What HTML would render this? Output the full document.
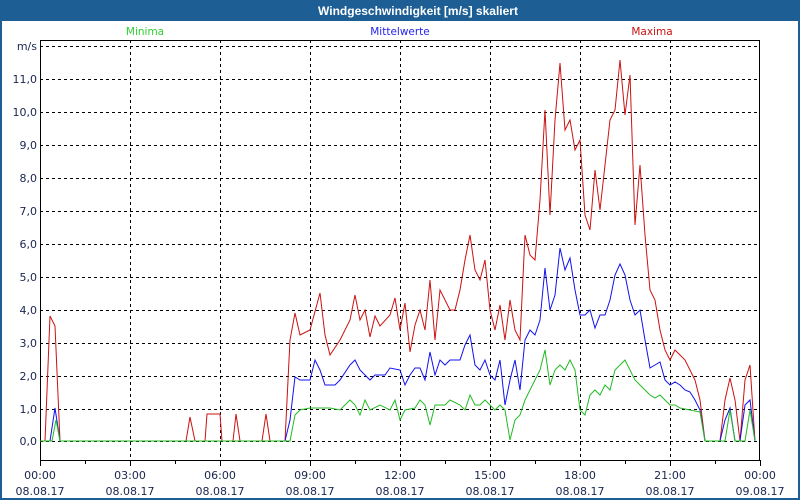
<!DOCTYPE html><html><head><style>body{margin:0;width:800px;height:500px;overflow:hidden;font-family:"DejaVu Sans","Liberation Sans",sans-serif}</style></head><body>
<svg width="800" height="500" xmlns="http://www.w3.org/2000/svg" font-family="DejaVu Sans, Liberation Sans, sans-serif">
<rect width="800" height="500" fill="#1d5e94"/>
<rect x="2" y="21" width="796" height="477" fill="#fff"/>
<text x="418" y="15" fill="#fff" font-size="12" font-weight="bold" text-anchor="middle" font-family="Liberation Sans, sans-serif">Windgeschwindigkeit [m/s] skaliert</text>
<text x="145" y="35" fill="#33cc33" font-size="10.5" text-anchor="middle">Minima</text>
<text x="400" y="35" fill="#2222ee" font-size="10.5" text-anchor="middle">Mittelwerte</text>
<text x="652" y="35" fill="#cc1111" font-size="10.5" text-anchor="middle">Maxima</text>
<g stroke="#000" stroke-dasharray="3,3" stroke-width="1">
<path d="M40 46.5H760M40 79.5H760M40 112.5H760M40 145.5H760M40 178.5H760M40 211.5H760M40 244.5H760M40 277.5H760M40 310.5H760M40 343.5H760M40 376.5H760M40 409.5H760M40 441.5H760"/>
<path d="M130.5 40V460M220.5 40V460M310.5 40V460M400.5 40V460M490.5 40V460M580.5 40V460M670.5 40V460"/>
</g>
<rect x="40.5" y="40.5" width="719" height="420" fill="none" stroke="#000"/>
<path d="M85.5 460v4M175.5 460v4M265.5 460v4M355.5 460v4M445.5 460v4M535.5 460v4M625.5 460v4M715.5 460v4M40.5 460v6M130.5 460v6M220.5 460v6M310.5 460v6M400.5 460v6M490.5 460v6M580.5 460v6M670.5 460v6M760.5 460v6" stroke="#000"/>
<g fill="#1a2550" font-size="11" text-anchor="end">
<text x="37" y="50">m/s</text><text x="37" y="83">11,0</text><text x="37" y="116">10,0</text><text x="37" y="149">9,0</text><text x="37" y="182">8,0</text><text x="37" y="215">7,0</text><text x="37" y="248">6,0</text><text x="37" y="281">5,0</text><text x="37" y="314">4,0</text><text x="37" y="347">3,0</text><text x="37" y="380">2,0</text><text x="37" y="413">1,0</text><text x="37" y="445">0,0</text>
</g>
<g fill="#1a2550" font-size="11" text-anchor="middle">
<text x="40" y="479">00:00</text><text x="40" y="495">08.08.17</text>
<text x="130" y="479">03:00</text><text x="130" y="495">08.08.17</text>
<text x="220" y="479">06:00</text><text x="220" y="495">08.08.17</text>
<text x="310" y="479">09:00</text><text x="310" y="495">08.08.17</text>
<text x="400" y="479">12:00</text><text x="400" y="495">08.08.17</text>
<text x="490" y="479">15:00</text><text x="490" y="495">08.08.17</text>
<text x="580" y="479">18:00</text><text x="580" y="495">08.08.17</text>
<text x="670" y="479">21:00</text><text x="670" y="495">08.08.17</text>
<text x="760" y="479">00:00</text><text x="760" y="495">09.08.17</text>
</g>
<g fill="none" stroke-width="1">
<polyline stroke="#cc1111" points="40,441 45,441 50,316 55,326 60,441 186,441 190,417 195,441 205,441 207,414 220,414 222,441 233,441 236,414 240,441 262,441 266,414 270,441 285,441 290,340 295,313 300,335 310,330 320,293 325,335 330,355 340,340 350,320 355,295 360,320 365,310 370,337 375,316 380,326 390,315 395,298 400,330 405,303 410,352 415,325 420,310 425,330 430,280 435,340 440,290 445,300 450,310 455,310 460,290 465,260 470,235 475,270 480,280 485,260 490,310 495,330 500,305 505,340 510,300 515,330 520,340 525,235 530,255 535,260 540,200 545,110 550,215 555,120 560,63 565,130 570,120 575,150 580,140 585,215 590,230 595,170 600,210 605,165 610,120 615,110 620,60 625,115 630,75 635,225 640,165 645,235 650,290 655,300 660,330 665,350 670,360 675,350 680,355 685,360 690,370 695,380 700,400 705,441 720,441 725,400 730,378 735,400 740,441 745,380 750,365 755,441"/>
<polyline stroke="#1111ee" points="40,441 50,441 55,408 60,441 285,441 290,420 295,377 300,380 310,380 315,360 320,370 325,385 335,385 340,380 350,365 355,360 360,370 370,380 375,375 385,375 390,368 400,370 405,385 410,375 415,368 420,368 425,380 430,352 435,375 440,360 445,365 450,360 460,360 465,345 470,335 475,365 480,370 485,360 490,375 495,380 500,360 505,405 510,380 515,360 520,390 525,340 530,330 535,335 540,320 545,268 550,310 555,295 560,248 565,270 570,258 575,290 580,315 585,315 590,310 595,328 600,315 605,315 610,300 615,275 620,264 625,275 630,300 635,315 640,310 645,340 650,368 655,365 660,362 665,380 670,385 675,382 680,385 685,390 690,392 695,400 700,410 705,441 720,441 725,420 730,408 735,441 740,441 745,405 750,400 755,441"/>
<polyline stroke="#22bb22" points="40,441 52,441 56,420 60,441 290,441 295,415 300,410 310,408 330,408 340,410 350,400 355,405 360,415 365,400 370,410 380,405 390,410 395,400 400,420 405,410 415,408 420,400 425,405 430,425 435,405 445,405 450,400 460,405 465,410 470,395 475,405 480,405 485,400 490,405 495,410 500,405 505,410 510,440 515,420 520,415 525,400 530,390 535,380 540,370 545,350 550,385 555,370 560,365 565,370 570,360 575,370 580,410 585,415 590,395 595,390 600,395 605,385 610,390 615,370 620,365 625,360 630,370 635,380 640,385 645,390 650,395 655,398 660,395 665,400 670,405 675,405 680,408 700,412 705,441 725,441 730,410 735,441 745,441 750,410 755,441"/>
</g>
</svg>
</body></html>
